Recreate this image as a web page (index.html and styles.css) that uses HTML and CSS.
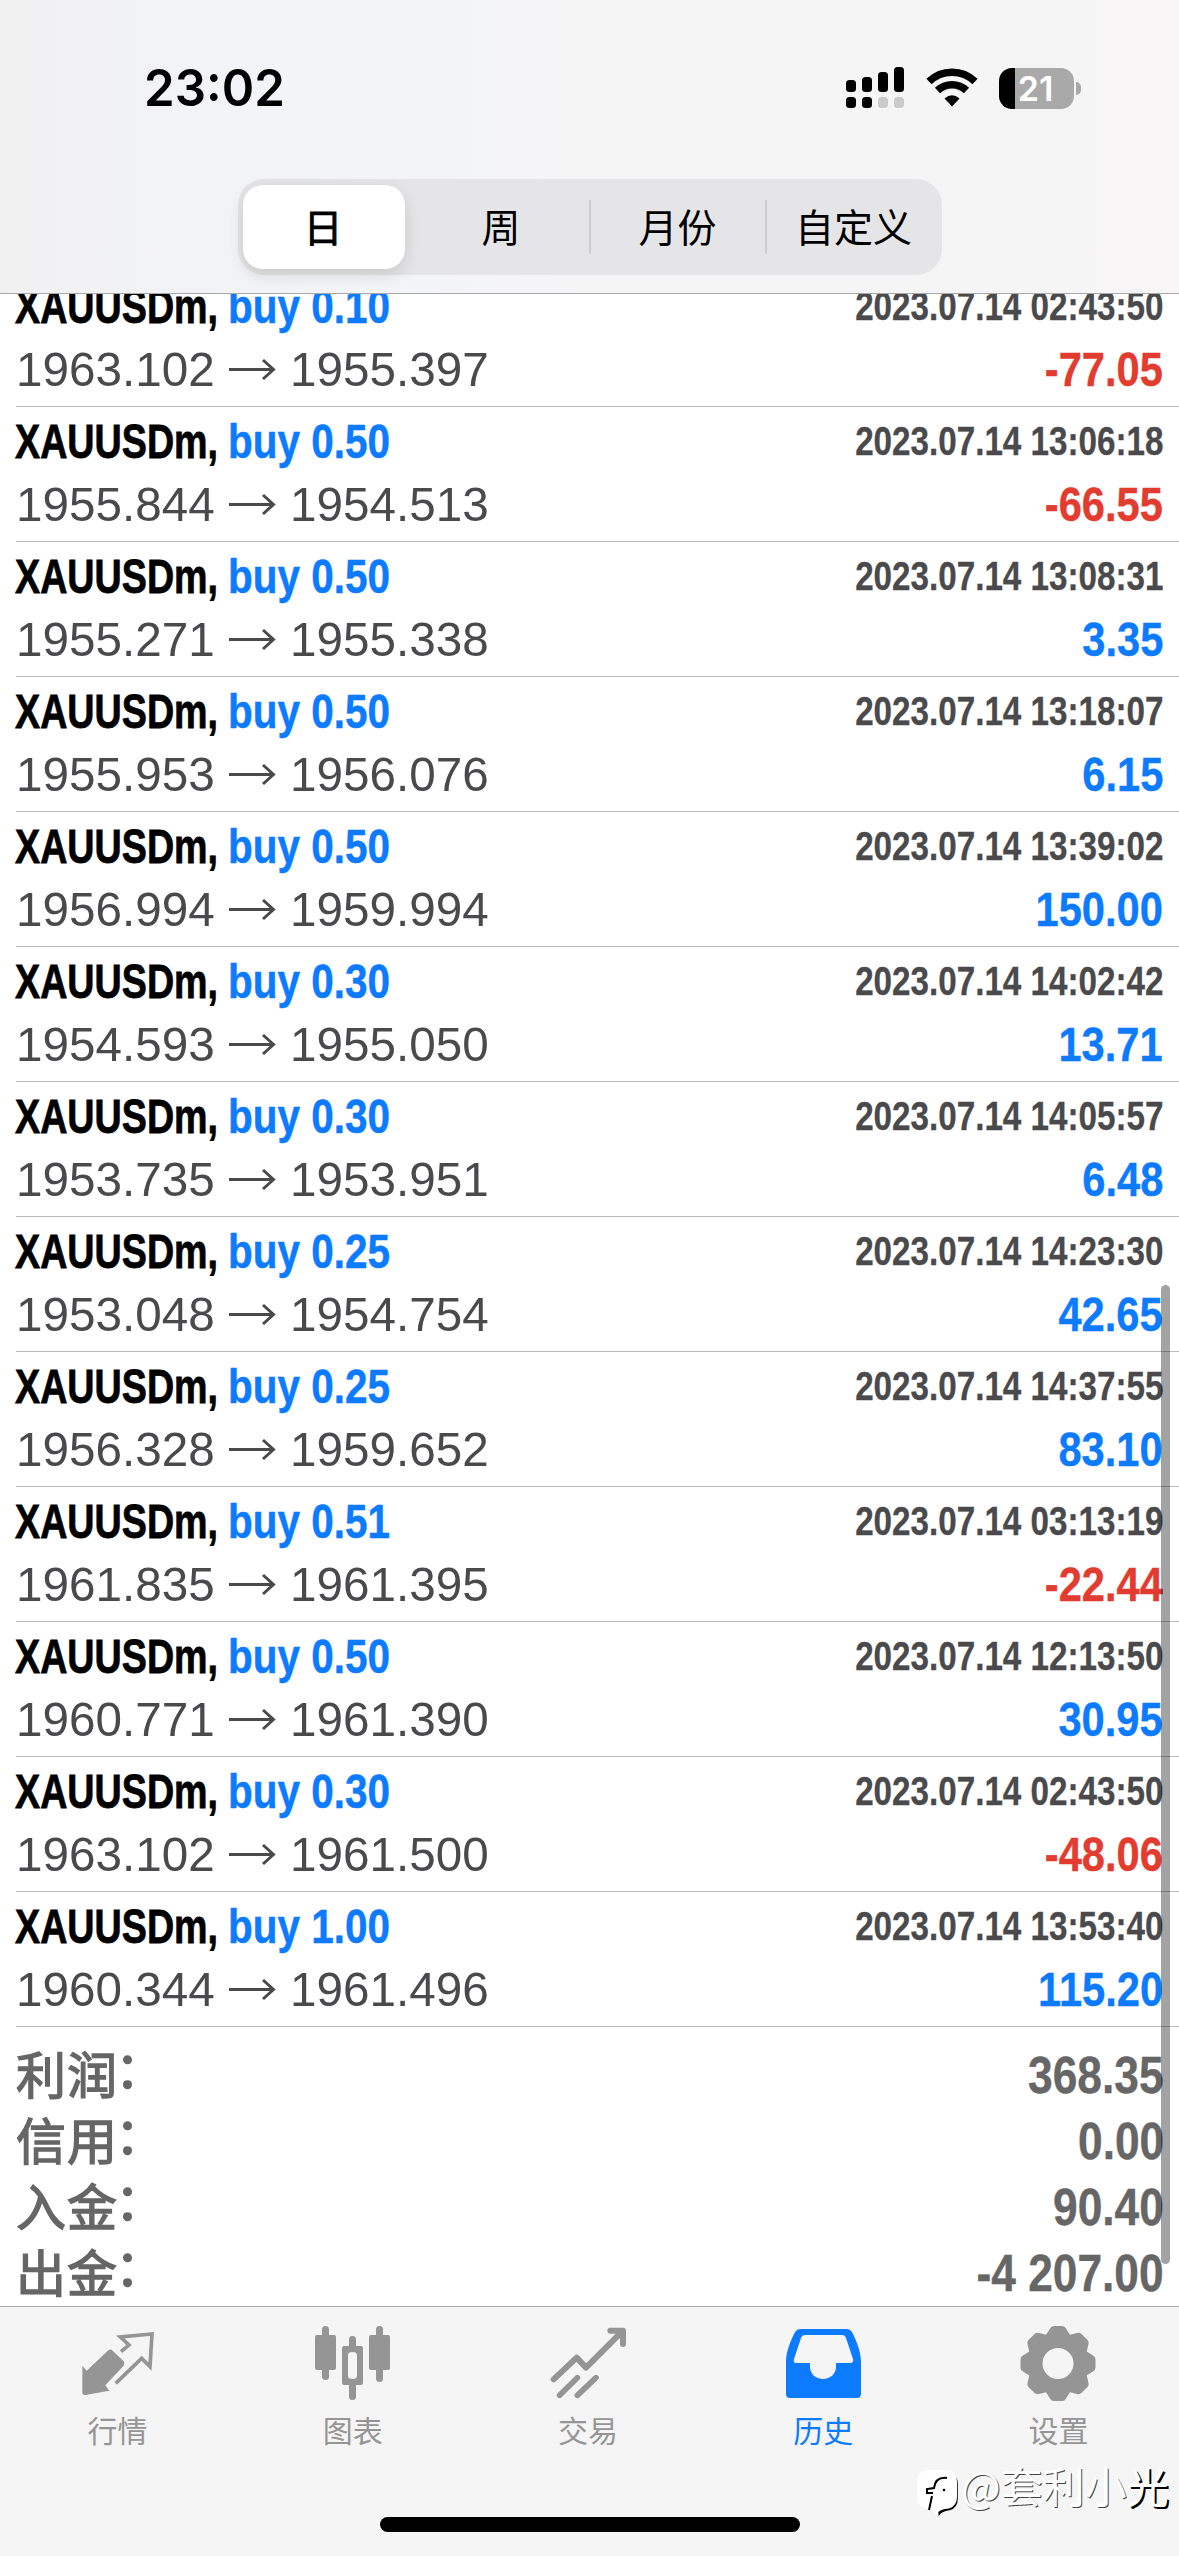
FILE: index.html
```html
<!DOCTYPE html>
<html lang="zh-CN">
<head>
<meta charset="utf-8">
<title>历史</title>
<link rel="stylesheet" href="styles.css">
</head>
<body>
<header class="header">
  <div class="status">
    <span class="clock">23:02</span>
    <div class="status-icons">
      <svg class="signal" width="58" height="42" viewBox="0 0 58 42">
        <rect x="0" y="13" width="10" height="12" rx="3.5"/><rect x="16" y="10" width="10" height="15" rx="3.5"/><rect x="32" y="5" width="10" height="20" rx="3.5"/><rect x="48" y="0" width="10" height="25" rx="3.5"/>
        <rect x="0" y="30" width="10" height="11" rx="3.5"/><rect x="16" y="30" width="10" height="11" rx="3.5"/>
        <g fill="#cbcbcc"><rect x="32" y="30" width="10" height="11" rx="3.5"/><rect x="48" y="30" width="10" height="11" rx="3.5"/></g>
      </svg>
      <svg class="wifi" width="52" height="42" viewBox="0 0 52 42">
        <g fill="none" stroke="#000" stroke-width="7.5"><path d="M3 14.5A33 33 0 0 1 49 14.5"/><path d="M11.5 23.5A21 21 0 0 1 40.500 23.500"/></g>
        <path d="M26 39.500 18.500 31.500Q26 25 33.500 31.500Z"/>
      </svg>
      <div class="battery"><span class="battery-text">21</span></div>
      <span class="battery-cap"></span>
    </div>
  </div>
  <nav class="segments">
    <span class="segment selected">日</span>
    <span class="segment">周</span>
    <span class="segment divided">月份</span>
    <span class="segment divided">自定义</span>
  </nav>
</header>

<main class="history">
  <ul class="deals" id="deals"></ul>
  <dl class="summary">
    <div class="total"><dt>利润<span class="colon">：</span></dt><dd>368.35</dd></div>
    <div class="total"><dt>信用<span class="colon">：</span></dt><dd>0.00</dd></div>
    <div class="total"><dt>入金<span class="colon">：</span></dt><dd>90.40</dd></div>
    <div class="total"><dt>出金<span class="colon">：</span></dt><dd>-4 207.00</dd></div>
  </dl>
</main>

<footer class="tabbar">
  <nav class="tabs">
    <a class="tab">
      <svg viewBox="21 21 240 240"><path fill="currentColor" d="M34 152 47 167 112 106Q119 100 125 107L158 139Q163 146 158 152L103 211 115 227 43 240Q34 241 34 232Z"/><path fill="none" stroke="currentColor" stroke-width="11" d="M150 110 174 90 148 66 243 57 237 155 212 130 134 205"/></svg>
      <span>行情</span>
    </a>
    <a class="tab">
      <svg viewBox="0 0 80 80" fill="currentColor"><rect x="2" y="13" width="21" height="35" rx="2"/><rect x="9" y="4" width="7" height="54" rx="3.500"/><rect x="56" y="13" width="21" height="35" rx="2"/><rect x="63" y="4" width="7" height="56" rx="3.500"/><rect x="36" y="14" width="7" height="16" rx="3.500"/><rect x="36" y="58" width="7" height="20" rx="3.500"/><path fill-rule="evenodd" d="M31 24H48Q50 24 50 26V61Q50 63 48 63H31Q29 63 29 61V26Q29 24 31 24ZM35 33V54Q35 57 39.500 57T44 54V33Q44 30 39.500 30T35 33Z"/></svg>
      <span>图表</span>
    </a>
    <a class="tab">
      <svg viewBox="24 21 240 240" fill="none" stroke="currentColor" stroke-width="18" stroke-linecap="round" stroke-linejoin="round"><path d="M41 193 110 128 138 158 243 53M211 47H249V87" /><path d="M59 241 112 188M112 241 168 188" stroke-width="17"/></svg>
      <span>交易</span>
    </a>
    <a class="tab active">
      <svg viewBox="0 0 80 80" fill="currentColor"><path fill-rule="evenodd" d="M17 7H64Q67 7 69 10C74 20 78 30 78 40V72Q78 76 74 76H7Q3 76 3 72V40C3 30 7 20 12 10Q14 7 17 7ZM22 13Q19 13 18 16L11 37Q10 41 13 41H27V45C27 52 33 57 40 57S53 52 53 45V41H67Q71 41 70 37L63 16Q62 13 59 13Z"/></svg>
      <span>历史</span>
    </a>
    <a class="tab">
      <svg viewBox="-40 -41.500 80 80" fill="none"><circle r="23" stroke="currentColor" stroke-width="15"/><g fill="currentColor"><path id="tooth" d="M-13-27-8-35Q-7-37.500-4-37.500H4Q7-37.500 8-35L13-27Z"/><use href="#tooth" transform="rotate(45)"/><use href="#tooth" transform="rotate(90)"/><use href="#tooth" transform="rotate(135)"/><use href="#tooth" transform="rotate(180)"/><use href="#tooth" transform="rotate(225)"/><use href="#tooth" transform="rotate(270)"/><use href="#tooth" transform="rotate(315)"/></g></svg>
      <span>设置</span>
    </a>
  </nav>
  <div class="home-indicator"></div>
</footer>

<div class="scrollbar"></div>
<div class="watermark">
  <svg width="44" height="50" viewBox="0 0 44 50">
    <path transform="translate(1.800 1.800)" fill="#000" d="M36 4Q39 7 39 13V27Q39 36 31 38.500C26 39 21 41 20 45L19 36 34 30Z"/>
    <path fill="#fff" d="M13 0H27Q40 0 40 13V27Q40 36 32 38.500C26 39 22 40 20 44L12 39Q0 38 0 27V13Q0 0 13 0Z"/>
    <path fill="none" stroke="#000" stroke-width="2" d="M30 8C22 7 18 11 17 18L10 19V23H16M15 26 12 40"/><circle cx="27" cy="20" r="1.300"/>
  </svg>
  <span class="handle">@套利小<b>光</b></span>
</div>
<script src="deals.js"></script>
</body>
</html>
```
FILE: styles.css
```css
* { box-sizing: border-box; margin: 0; padding: 0; }
body {
  position: relative;
  width: 1179px;
  height: 2556px;
  overflow: hidden;
  display: flex;
  flex-direction: column;
  background: #fff;
  color: #000;
  font-family: "Liberation Sans", "Noto Sans CJK SC", sans-serif;
}

/* Header */
.header {
  flex: none;
  height: 294px;
  border-bottom: 1px solid #a9a9ab;
  background: linear-gradient(90deg, #f1f1f2 0%, #f3f4f8 27%, #f5f5f6 50%, #f5f5f6 80%, #f7f5f5 100%);
}
.status {
  height: 179px;
  padding: 67px 98px 0 144px;
  display: flex;
  justify-content: space-between;
  align-items: flex-start;
}
.clock {
  font: 600 51px/42px Inter, sans-serif;
  transform: scaleX(.965);
  transform-origin: left;
}
.status-icons { display: flex; align-items: center; }
.wifi { margin: 0 21px 0 22px; }
.battery {
  width: 75px;
  height: 41px;
  border-radius: 13px;
  background: linear-gradient(90deg, #000 16px, #aaa9aa 16px);
  text-align: center;
}
.battery-text { font: 600 34px/42px Inter, sans-serif; color: #fff; padding-right: 2px; }
.battery-cap {
  width: 5px;
  height: 13px;
  margin-left: 2px;
  border-radius: 0 5px 5px 0;
  background: #aaa9aa;
}
.segments {
  width: 704px;
  height: 96px;
  margin-left: 238px;
  border-radius: 26px;
  background: #e5e5e7;
  display: grid;
  grid-template-columns: repeat(4, 1fr);
}
.segment {
  display: flex;
  align-items: center;
  justify-content: center;
  padding: 0 2px 5px 0;
  font: 400 39px/50px "Noto Sans CJK SC", sans-serif;
}
.selected {
  margin: 6px 9px 6px 5px;
  border-radius: 20px;
  background: #fff;
  box-shadow: 0 6px 16px rgba(0, 0, 0, .12);
  -webkit-text-stroke: .8px #000;
}
.divided {
  background: linear-gradient(#cfcfd2, #cfcfd2) no-repeat left 21px / 2px 54px;
}
.segment.divided { margin-left: -1px; padding-right: 0; }

/* Deals */
.history { flex: none; height: 2012px; overflow: hidden; }
.deals { list-style: none; margin-top: -22px; }
.deal {
  height: 135px;
  margin-left: 16px;
  padding: 4px 16px 0 0;
  border-bottom: 1px solid #bcbcbe;
}
.line { display: flex; justify-content: space-between; align-items: flex-start; white-space: nowrap; }
.line.head { height: 60px; }
.line.body { height: 66px; }
.title { display: flex; font-size: 49px; line-height: 60px; font-weight: 700; }
.symbol { width: 213px; margin-left: -1px; }
.symbol i, .op { display: inline-block; font-style: normal; transform-origin: left; }
.symbol i { transform: scaleX(.769); -webkit-text-stroke: .8px #000; }
.op { color: #0d7bff; transform: scaleX(.826); -webkit-text-stroke: .5px #0d7bff; }
.time {
  font-size: 40px;
  line-height: 60px;
  font-weight: 700;
  color: #4a4a4d;
  transform: scaleX(.83);
  transform-origin: right;
  -webkit-text-stroke: .3px #4a4a4d;
}
.prices { display: flex; font-size: 49px; line-height: 66px; color: #4a4a4d; }
.price { width: 213px; display: flex; }
.price i { font-style: normal; transform: scaleX(.972); transform-origin: left; }
.arrow { width: 61px; height: 66px; }
.value {
  font-size: 49px;
  line-height: 66px;
  font-weight: 700;
  color: #0d7bff;
  transform: scaleX(.85);
  transform-origin: right;
  -webkit-text-stroke: .4px currentColor;
}
.value.loss { color: #e23b30; }

/* Totals */
.summary { padding: 15px 15px 0 16px; color: #666; }
.total { display: flex; justify-content: space-between; height: 66px; }
.total dt {
  font: 400 50px/60px "Noto Sans CJK SC", sans-serif;
  letter-spacing: 1px;
  -webkit-text-stroke: 1.4px #666;
}
.colon { margin-left: -3px; line-height: 1px; vertical-align: 6px; }
.total dd {
  font-size: 51.5px;
  line-height: 66px;
  font-weight: 700;
  transform: scaleX(.86);
  transform-origin: right;
  -webkit-text-stroke: .4px #666;
}

/* Tab bar */
.tabbar { flex: none; height: 250px; border-top: 1px solid #a9a9ab; background: #f5f5f5; }
.tabs { height: 210px; padding: 15px 3px 0 0; display: grid; grid-template-columns: repeat(5, 1fr); }
.tab {
  display: flex;
  flex-direction: column;
  align-items: center;
  gap: 9px;
  color: #959595;
  font: 400 30px/36px "Noto Sans CJK SC", sans-serif;
}
.tab svg { width: 80px; height: 80px; }
.tab.active { color: #0d7bff; }
.home-indicator { width: 420px; height: 15px; margin: 0 auto; border-radius: 8px; background: #000; }

/* Overlays */
.scrollbar {
  position: absolute;
  left: 1161px;
  top: 1285px;
  width: 9px;
  height: 979px;
  border-radius: 5px;
  background: rgba(0, 0, 0, .36);
}
.watermark { position: absolute; left: 917px; top: 2470px; display: flex; white-space: nowrap; }
.handle {
  font: 400 42px/42px "Noto Sans CJK SC", sans-serif;
  margin-top: -6px;
  color: #fff;
  text-shadow: 1px 1px 0 #444;
}
.handle b { font-weight: 400; text-shadow: 2px 2px 0 #000; }
```
FILE: deals.js
```js
const deals = [
  ["0.10", "2023.07.14 02:43:50", "1963.102", "1955.397", "-77.05"],
  ["0.50", "2023.07.14 13:06:18", "1955.844", "1954.513", "-66.55"],
  ["0.50", "2023.07.14 13:08:31", "1955.271", "1955.338", "3.35"],
  ["0.50", "2023.07.14 13:18:07", "1955.953", "1956.076", "6.15"],
  ["0.50", "2023.07.14 13:39:02", "1956.994", "1959.994", "150.00"],
  ["0.30", "2023.07.14 14:02:42", "1954.593", "1955.050", "13.71"],
  ["0.30", "2023.07.14 14:05:57", "1953.735", "1953.951", "6.48"],
  ["0.25", "2023.07.14 14:23:30", "1953.048", "1954.754", "42.65"],
  ["0.25", "2023.07.14 14:37:55", "1956.328", "1959.652", "83.10"],
  ["0.51", "2023.07.14 03:13:19", "1961.835", "1961.395", "-22.44"],
  ["0.50", "2023.07.14 12:13:50", "1960.771", "1961.390", "30.95"],
  ["0.30", "2023.07.14 02:43:50", "1963.102", "1961.500", "-48.06"],
  ["1.00", "2023.07.14 13:53:40", "1960.344", "1961.496", "115.20"]
];
document.getElementById("deals").innerHTML = deals.map(([lots, time, open, close, profit]) => `
  <li class="deal">
    <div class="line head">
      <div class="title"><span class="symbol"><i>XAUUSDm,</i></span><span class="op">buy ${lots}</span></div>
      <span class="time">${time}</span>
    </div>
    <div class="line body">
      <div class="prices">
        <span class="price"><i>${open}</i></span>
        <svg class="arrow" viewBox="0 0 61 66" fill="none" stroke="#4a4a4d" stroke-width="3"><path d="M0 33.500H44M34 24 44.500 33.500 34 43"/></svg>
        <span class="price"><i>${close}</i></span>
      </div>
      <span class="value${profit[0] === "-" ? " loss" : ""}">${profit}</span>
    </div>
  </li>`).join("");
```
